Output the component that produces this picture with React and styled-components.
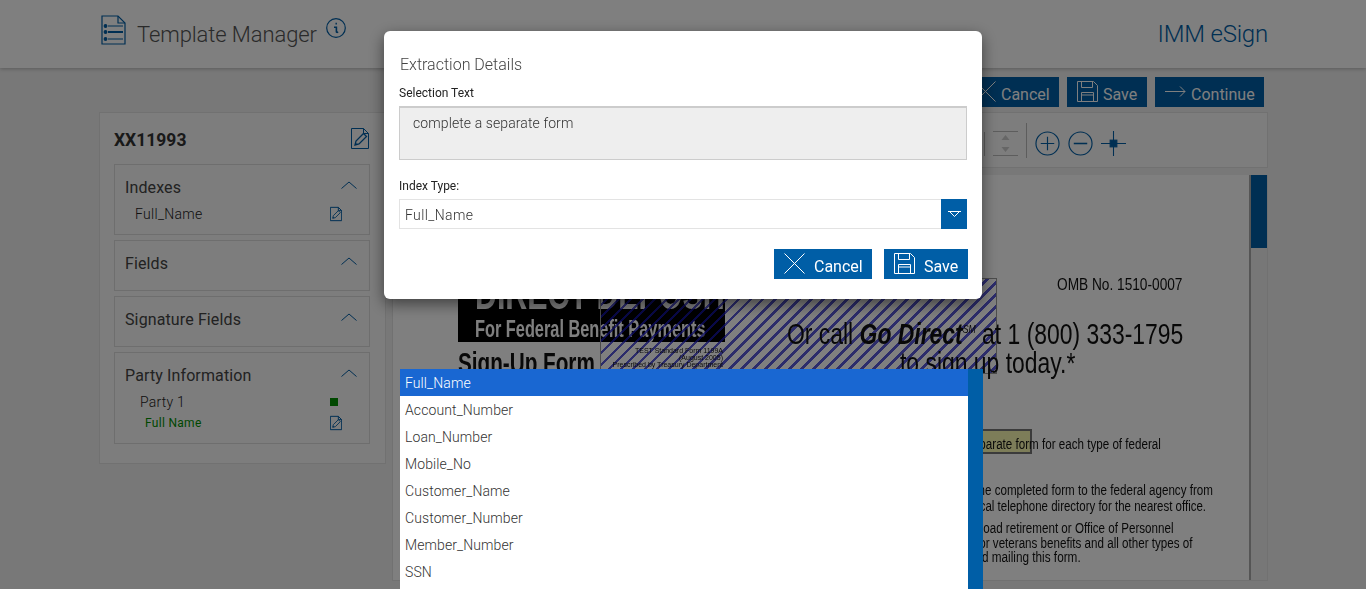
import React from "react";
import styled, { createGlobalStyle } from "styled-components";

const BLUE = "#005ea6";

const GlobalStyle = createGlobalStyle`
  html, body {
    margin: 0;
    height: 100%;
    overflow: hidden;
    background: #f1f1f1;
    font-family: Roboto, "Liberation Sans", sans-serif;
    color: #333;
  }
  * { box-sizing: border-box; }
`;

const INDEX_TYPES = [
  "Full_Name",
  "Account_Number",
  "Loan_Number",
  "Mobile_No",
  "Customer_Name",
  "Customer_Number",
  "Member_Number",
  "SSN",
];

// icons
const ListDocIcon = () => (
  <svg width="25" height="30" viewBox="0 0 25 30" fill="none" stroke={BLUE} strokeWidth="1.2">
    <path d="M1 1h16l7 7v21H1z" />
    <path d="M17 1v7h7" />
    <path d="M7 11h15M7 24h15" />
    <path d="M7 17h15" strokeWidth="2" />
    <circle cx="4.5" cy="11" r="1.3" fill={BLUE} />
    <circle cx="4.5" cy="17" r="1.3" fill={BLUE} />
    <circle cx="4.5" cy="24" r="1.3" fill={BLUE} />
  </svg>
);

const InfoIcon = () => (
  <svg width="20" height="20" viewBox="0 0 20 20" fill="none" stroke={BLUE} strokeWidth="1.2">
    <circle cx="10" cy="10" r="9.3" />
    <path d="M9.5 5.6h1.4" strokeWidth="1.8" />
    <path d="M8 9.2h2.4v4.6c0 .6.6.7 1.8.3" strokeWidth="1.6" />
  </svg>
);

const EditDocIcon = ({ small }) => (
  <svg
    width={small ? 12 : 18}
    height={small ? 16 : 21}
    viewBox="0 0 18 21"
    fill="none"
    stroke={BLUE}
    strokeWidth={small ? 1.5 : 1}
  >
    <path d="M.5.5h12l5 5v15H.5z" />
    <path d="M12.5.5v5h5" />
    <path d="M4 17l1-4 7.5-7.5 3 3L8 16z" strokeWidth="1.3" />
    <path d="M5.5 15.5l-.5 1" strokeWidth="2" />
  </svg>
);

const ChevronUp = () => (
  <svg width="16" height="8" viewBox="0 0 16 8" fill="none" stroke={BLUE} strokeWidth="1">
    <path d="M.5 7.5L8 1l7.5 6.5" />
  </svg>
);

const CrossIcon = () => (
  <svg width="21" height="21" viewBox="0 0 21 21" fill="none" stroke="#fff" strokeWidth="1">
    <path d="M.5.5l20 20M20.5.5l-20 20" />
  </svg>
);

const FloppyIcon = () => (
  <svg width="21" height="21" viewBox="0 0 21 21" fill="none" stroke="#fff" strokeWidth="1">
    <path d="M.5.5h16l4 4v16H.5z" />
    <path d="M4.5.5v6h11v-6" />
    <path d="M4.5 20.5v-9h12v9M4.5 14h12" />
  </svg>
);

const ArrowIcon = () => (
  <svg width="21" height="11" viewBox="0 0 21 11" fill="none" stroke="#fff" strokeWidth="1">
    <path d="M0 5.5h20M15 .5l5 5-5 5" />
  </svg>
);

const CaretIcon = () => (
  <svg width="13" height="6" viewBox="0 0 13 6" fill="none" stroke="#fff" strokeWidth="1">
    <path d="M0 .5h13" />
    <path d="M2 1l4.5 4.5L11 1" />
  </svg>
);

const StepperIcon = () => (
  <svg width="27" height="25" viewBox="0 0 27 25" fill="none">
    <path d="M1 .5h25M1 24.5h25" stroke="#bbb" />
    <path d="M13.5 4l4 5h-8zM13.5 21l4-5h-8z" fill="#ccc" />
  </svg>
);

const ZoomInIcon = () => (
  <svg width="25" height="25" viewBox="0 0 26 26" fill="none" stroke={BLUE} strokeWidth="1.2">
    <circle cx="13" cy="13" r="12" />
    <path d="M6 13h14M13 6v14" />
  </svg>
);

const ZoomOutIcon = () => (
  <svg width="25" height="25" viewBox="0 0 26 26" fill="none" stroke={BLUE} strokeWidth="1.2">
    <circle cx="13" cy="13" r="12" />
    <path d="M6 13h14" strokeWidth="1.6" />
  </svg>
);

const FitIcon = () => (
  <svg width="25" height="25" viewBox="0 0 26 26" fill="none" stroke={BLUE} strokeWidth="1.1">
    <path d="M0 13h26M13 0v26" />
    <rect x="9.5" y="9.5" width="7" height="7" fill={BLUE} />
  </svg>
);

function App() {
  return (
    <>
      <GlobalStyle />
      <Header>
        <ListDocIcon />
        <PageTitle>Template Manager</PageTitle>
        <InfoWrap>
          <InfoIcon />
        </InfoWrap>
        <Brand>IMM eSign</Brand>
      </Header>

      <Main>
        <SidePanel>
          <DocHead>
            <DocId>XX11993</DocId>
            <EditDocIcon />
          </DocHead>

          <Section $height={71}>
            <SectionHead>
              <SectionTitle>Indexes</SectionTitle>
              <ChevronUp />
            </SectionHead>
            <IndexRow>
              <span>Full_Name</span>
              <EditDocIcon small />
            </IndexRow>
          </Section>

          <Section $height={51}>
            <SectionHead>
              <SectionTitle>Fields</SectionTitle>
              <ChevronUp />
            </SectionHead>
          </Section>

          <Section $height={51}>
            <SectionHead>
              <SectionTitle>Signature Fields</SectionTitle>
              <ChevronUp />
            </SectionHead>
          </Section>

          <Section $height={92}>
            <SectionHead>
              <SectionTitle>Party Information</SectionTitle>
              <ChevronUp />
            </SectionHead>
            <PartyRow>
              <span>Party 1</span>
              <PartyDot />
            </PartyRow>
            <PartyField>
              <span>Full Name</span>
              <EditDocIcon small />
            </PartyField>
          </Section>
        </SidePanel>

        <Workspace>
          <ActionBar>
            <ActionButton $width={94} $gap={5}>
              <CrossIcon />
              Cancel
            </ActionButton>
            <ActionButton $width={80} $gap={5}>
              <FloppyIcon />
              Save
            </ActionButton>
            <ActionButton $width={109} $gap={5}>
              <ArrowIcon />
              Continue
            </ActionButton>
          </ActionBar>

          <Toolbar>
            <ToolDivider $height={24} />
            <StepperIcon />
            <ToolDivider $height={35} $raise={6} />
            <ZoomGroup>
              <ZoomInIcon />
              <ZoomOutIcon />
              <FitIcon />
            </ZoomGroup>
          </Toolbar>

          <DocFrame>
            <Paper>
              <Banner>
                <BannerBig>DIRECT DEPOSIT</BannerBig>
                <BannerSub>For Federal Benefit Payments</BannerSub>
              </Banner>
              <Hatch />
              <SignUp>Sign-Up Form</SignUp>
              <TinyBlock>
                <div>TEST Standard Form 1199A</div>
                <div>(August 2005)</div>
                <div>Prescribed by Treasury Department</div>
              </TinyBlock>

              <Line $x={664} $y={101} $size={16} $sx={0.855}>OMB No. 1510-0007</Line>
              <Line $x={394} $y={143} $size={29} $sx={0.79}>
                Or call <GoDirect>Go Direct<sup>SM</sup></GoDirect> at 1 (800) 333-1795
              </Line>
              <Line $x={507} $y={172} $size={29} $sx={0.79}>to sign up today.*</Line>

              <Highlight />
              <Line $right={88} $y={261} $size={14} $sx={0.83}>complete a separate form for each type of federal</Line>
              <Line $right={36} $y={307} $size={14} $sx={0.83}>Send the completed form to the federal agency from</Line>
              <Line $right={43} $y={323} $size={14} $sx={0.82}>your local telephone directory for the nearest office.</Line>
              <Line $right={75} $y={345} $size={14} $sx={0.83}>For railroad retirement or Office of Personnel</Line>
              <Line $right={57} $y={360} $size={14} $sx={0.83}>Management or veterans benefits and all other types of</Line>
              <Line $right={168} $y={374} $size={14} $sx={0.84}>Before you send mailing this form.</Line>
            </Paper>
            <ScrollTrack>
              <ScrollThumb />
            </ScrollTrack>
          </DocFrame>
        </Workspace>
      </Main>

      <Backdrop />

      <Modal>
        <ModalTitle>Extraction Details</ModalTitle>
        <FieldLabel>Selection Text</FieldLabel>
        <SelectionBox>complete a separate form</SelectionBox>
        <FieldLabel $gap={19}>Index Type:</FieldLabel>
        <SelectBox>
          <SelectValue>Full_Name</SelectValue>
          <SelectCaret>
            <CaretIcon />
          </SelectCaret>
        </SelectBox>
        <ModalActions>
          <ActionButton $width={98} $gap={9}>
            <CrossIcon />
            Cancel
          </ActionButton>
          <ActionButton $width={84} $gap={9}>
            <FloppyIcon />
            Save
          </ActionButton>
        </ModalActions>
      </Modal>

      <OptionList>
        <Options>
          {INDEX_TYPES.map((name, i) => (
            <Option key={name} $active={i === 0}>
              {name}
            </Option>
          ))}
        </Options>
        <OptionScroll />
      </OptionList>
    </>
  );
}

export default App;

const Header = styled.header`
  height: 68px;
  background: #fff;
  box-shadow: 0 1px 4px rgba(0, 0, 0, 0.25);
  display: flex;
  align-items: flex-start;
  padding: 15px 98px 0 101px;
`;

const PageTitle = styled.h1`
  margin: 5px 0 0 11px;
  font-size: 22px;
  font-weight: 300;
  line-height: 30px;
  letter-spacing: -0.1px;
  color: #555;
`;

const InfoWrap = styled.div`
  margin: 3px 0 0 9px;
  height: 20px;
`;

const Brand = styled.div`
  margin: 4px 0 0 auto;
  font-size: 24px;
  font-weight: 300;
  line-height: 30px;
  letter-spacing: -0.2px;
  color: ${BLUE};
`;

const Main = styled.main`
  display: flex;
  align-items: flex-start;
  gap: 6px;
  padding-left: 99px;
`;

const SidePanel = styled.aside`
  width: 287px;
  height: 352px;
  margin-top: 44px;
  padding: 0 15px 0 14px;
  background: #fafafa;
  border: 1px solid #e3e3e3;
  display: flex;
  flex-direction: column;
  gap: 5px;
`;

const DocHead = styled.div`
  height: 46px;
  padding: 8px 1px 0 0;
  display: flex;
  align-items: center;
  justify-content: space-between;
  svg {
    margin-top: -3px;
  }
`;

const DocId = styled.div`
  font-size: 17.5px;
  font-weight: 700;
  color: #333;
`;

const Section = styled.section`
  flex: none;
  height: ${(p) => p.$height}px;
  border: 1.5px solid #ddd;
  background: #fafafa;
  padding: 11px 12px 0 10px;
`;

const SectionHead = styled.div`
  display: flex;
  align-items: center;
  justify-content: space-between;
  height: 22px;
  svg {
    margin-top: -4px;
  }
`;

const SectionTitle = styled.div`
  font-size: 16px;
  letter-spacing: 0.12px;
  color: #444;
`;

const IndexRow = styled.div`
  display: flex;
  justify-content: space-between;
  align-items: center;
  padding: 9px 15px 0 10px;
  font-size: 14px;
  letter-spacing: 0.3px;
  font-weight: 300;
  color: #222;
  height: 23px;
`;

const PartyRow = styled.div`
  display: flex;
  justify-content: space-between;
  align-items: center;
  padding: 7px 19px 0 15px;
  font-size: 14px;
  font-weight: 300;
  letter-spacing: 0.2px;
  color: #222;
  height: 24px;
`;

const PartyDot = styled.i`
  width: 8px;
  height: 8px;
  background: #009000;
`;

const PartyField = styled.div`
  display: flex;
  justify-content: space-between;
  align-items: center;
  margin-top: 2.5px;
  padding: 0 15px 0 20px;
  font-size: 12px;
  letter-spacing: 0.3px;
  color: #009000;
  height: 20px;
`;

const Workspace = styled.div`
  width: 876px;
  padding-top: 9px;
`;

const ActionBar = styled.div`
  display: flex;
  justify-content: flex-end;
  gap: 8px;
  padding-right: 4px;
  height: 30px;
`;

const ActionButton = styled.button`
  width: ${(p) => p.$width}px;
  height: 30px;
  border: 0;
  padding: 4px 0 0 10px;
  display: flex;
  align-items: center;
  gap: ${(p) => p.$gap}px;
  background: ${BLUE};
  color: #fff;
  font-family: Roboto, "Liberation Sans", sans-serif;
  font-size: 16px;
  svg {
    margin-top: -6px;
    flex: none;
  }
`;

const Toolbar = styled.div`
  height: 56px;
  margin-top: 5px;
  padding: 7px 0 0 591px;
  background: #fafafa;
  border: 1px solid #e3e3e3;
  display: flex;
  align-items: center;
  gap: 7px;
`;

const ToolDivider = styled.div`
  width: 1px;
  height: ${(p) => p.$height}px;
  margin-top: ${(p) => (p.$raise ? -p.$raise : 0)}px;
  background: #bbb;
`;

const ZoomGroup = styled.div`
  display: flex;
  gap: 8px;
  margin-left: 1px;
`;

const DocFrame = styled.div`
  height: 406px;
  margin-top: 7px;
  display: flex;
  background: #eee;
  border: 1px solid #e3e3e3;
  border-top: 0;
`;

const Paper = styled.div`
  position: relative;
  flex: 1;
  background: #fff;
  overflow: hidden;
  filter: blur(0.3px);
  font-family: "Liberation Sans", Arial, sans-serif;
  color: #111;
`;

const ScrollTrack = styled.div`
  width: 18px;
  background: #eee;
  border-left: 2px solid #aaa;
`;

const ScrollThumb = styled.div`
  height: 73px;
  background: ${BLUE};
`;

const Banner = styled.div`
  position: absolute;
  left: 65px;
  top: 80px;
  width: 267px;
  height: 87px;
  padding-top: 16px;
  background: #000;
  color: #fff;
  font-weight: 700;
  overflow: hidden;
  white-space: nowrap;
`;

const BannerBig = styled.div`
  font-size: 44px;
  line-height: 46px;
  transform: scaleX(0.69);
  transform-origin: left;
  margin-left: 17px;
`;

const BannerSub = styled.div`
  font-size: 23px;
  line-height: 22px;
  margin-top: 1px;
  margin-left: 17px;
  transform: scaleX(0.71);
  transform-origin: left;
`;

const Hatch = styled.div`
  position: absolute;
  left: 207px;
  top: 103px;
  width: 397px;
  height: 96px;
  border: 1px solid #999;
  background: repeating-linear-gradient(
    135deg,
    rgba(25, 25, 200, 0.72) 0 2.6px,
    transparent 2.6px 8.5px
  );
`;

const SignUp = styled.div`
  position: absolute;
  left: 65px;
  top: 171px;
  font-size: 30px;
  font-weight: 700;
  white-space: nowrap;
  transform: scaleX(0.69);
  transform-origin: left;
`;

const TinyBlock = styled.div`
  position: absolute;
  right: 526px;
  top: 172px;
  font-size: 7px;
  line-height: 7px;
  text-align: right;
  white-space: nowrap;
`;

const Line = styled.div`
  position: absolute;
  top: ${(p) => p.$y}px;
  ${(p) => (p.$right !== undefined ? `right: ${p.$right}px;` : `left: ${p.$x}px;`)}
  font-size: ${(p) => p.$size}px;
  line-height: 1.15;
  white-space: nowrap;
  transform: scaleX(${(p) => p.$sx});
  transform-origin: ${(p) => (p.$right !== undefined ? "right" : "left")};
`;

const GoDirect = styled.em`
  font-weight: 700;
  sup {
    font-size: 11px;
    font-weight: 400;
    line-height: 0;
  }
`;

const Highlight = styled.div`
  position: absolute;
  left: 559px;
  top: 254px;
  width: 80px;
  height: 25px;
  background: rgba(250, 250, 170, 0.9);
  border: 2px solid #777;
`;

const Backdrop = styled.div`
  position: fixed;
  inset: 0;
  background: rgba(0, 0, 0, 0.5);
`;

const Modal = styled.div`
  position: fixed;
  left: 384px;
  top: 31px;
  width: 598px;
  height: 268px;
  background: #fff;
  border-radius: 6px;
  box-shadow: 0 5px 15px rgba(0, 0, 0, 0.5);
  padding: 24px 14px 0 15px;
`;

const ModalTitle = styled.div`
  font-size: 16px;
  font-weight: 300;
  line-height: 20px;
  color: #444;
  margin-left: 1px;
`;

const FieldLabel = styled.div`
  margin-top: ${(p) => p.$gap || 11}px;
  margin-bottom: 6px;
  font-size: 12px;
  line-height: 14px;
  color: #222;
`;

const SelectionBox = styled.div`
  width: 568px;
  height: 54px;
  padding: 7px 13px;
  background: #eee;
  border: 1px solid #ccc;
  border-top-width: 2px;
  font-size: 14px;
  font-weight: 300;
  line-height: 17px;
  letter-spacing: 0.1px;
  color: #333;
`;

const SelectBox = styled.div`
  width: 568px;
  height: 30px;
  display: flex;
  border: 1px solid #e3e3e3;
  border-right: 0;
`;

const SelectValue = styled.div`
  flex: 1;
  padding: 0 5px;
  line-height: 30px;
  font-size: 14px;
  font-weight: 300;
  letter-spacing: 0.4px;
  color: #333;
`;

const SelectCaret = styled.div`
  width: 26px;
  margin: -1px 0;
  background: ${BLUE};
  display: flex;
  align-items: center;
  justify-content: center;
`;

const ModalActions = styled.div`
  display: flex;
  justify-content: flex-end;
  gap: 12px;
  margin-top: 20px;
`;

const OptionList = styled.div`
  position: fixed;
  left: 400px;
  top: 369px;
  width: 583px;
  height: 220px;
  background: #fff;
  display: flex;
  overflow: hidden;
`;

const Options = styled.ul`
  flex: 1;
  margin: 0;
  padding: 0;
  list-style: none;
`;

const Option = styled.li`
  height: 27px;
  padding: 0 5px;
  line-height: 28px;
  font-size: 14px;
  font-weight: 300;
  letter-spacing: 0.1px;
  background: ${(p) => (p.$active ? "#1967d2" : "#fff")};
  color: ${(p) => (p.$active ? "#fff" : "#333")};
`;

const OptionScroll = styled.div`
  width: 15px;
  background: ${BLUE};
`;
